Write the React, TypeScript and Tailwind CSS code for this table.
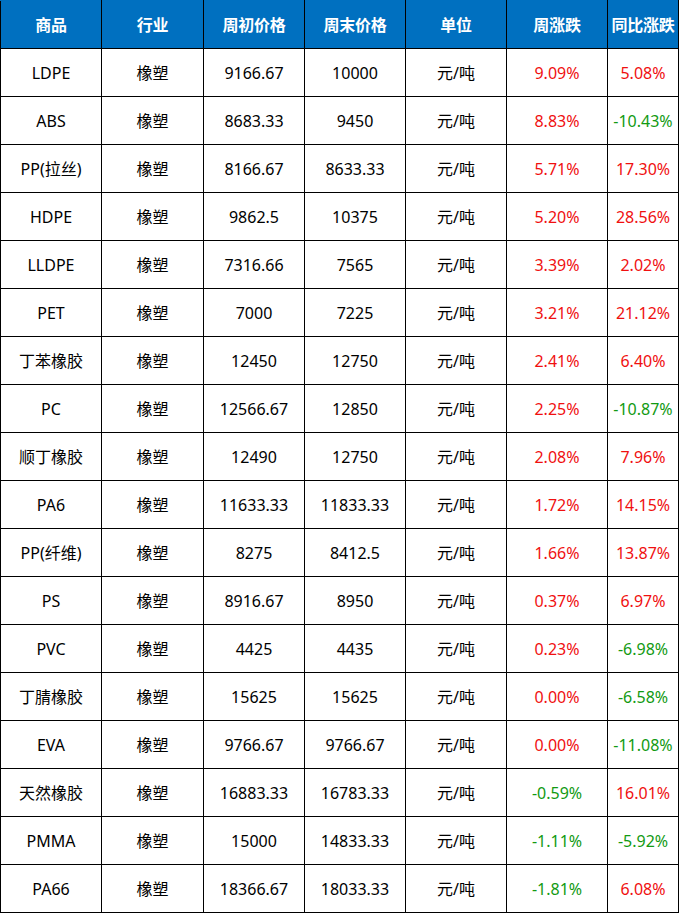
type Row = {
  name: string
  start: string
  end: string
  wow: string
  yoy: string
}

const rows: Row[] = [
  { name: 'LDPE', start: '9166.67', end: '10000', wow: '9.09%', yoy: '5.08%' },
  { name: 'ABS', start: '8683.33', end: '9450', wow: '8.83%', yoy: '-10.43%' },
  { name: 'PP(拉丝)', start: '8166.67', end: '8633.33', wow: '5.71%', yoy: '17.30%' },
  { name: 'HDPE', start: '9862.5', end: '10375', wow: '5.20%', yoy: '28.56%' },
  { name: 'LLDPE', start: '7316.66', end: '7565', wow: '3.39%', yoy: '2.02%' },
  { name: 'PET', start: '7000', end: '7225', wow: '3.21%', yoy: '21.12%' },
  { name: '丁苯橡胶', start: '12450', end: '12750', wow: '2.41%', yoy: '6.40%' },
  { name: 'PC', start: '12566.67', end: '12850', wow: '2.25%', yoy: '-10.87%' },
  { name: '顺丁橡胶', start: '12490', end: '12750', wow: '2.08%', yoy: '7.96%' },
  { name: 'PA6', start: '11633.33', end: '11833.33', wow: '1.72%', yoy: '14.15%' },
  { name: 'PP(纤维)', start: '8275', end: '8412.5', wow: '1.66%', yoy: '13.87%' },
  { name: 'PS', start: '8916.67', end: '8950', wow: '0.37%', yoy: '6.97%' },
  { name: 'PVC', start: '4425', end: '4435', wow: '0.23%', yoy: '-6.98%' },
  { name: '丁腈橡胶', start: '15625', end: '15625', wow: '0.00%', yoy: '-6.58%' },
  { name: 'EVA', start: '9766.67', end: '9766.67', wow: '0.00%', yoy: '-11.08%' },
  { name: '天然橡胶', start: '16883.33', end: '16783.33', wow: '-0.59%', yoy: '16.01%' },
  { name: 'PMMA', start: '15000', end: '14833.33', wow: '-1.11%', yoy: '-5.92%' },
  { name: 'PA66', start: '18366.67', end: '18033.33', wow: '-1.81%', yoy: '6.08%' },
]

const headers = ['商品', '行业', '周初价格', '周末价格', '单位', '周涨跌', '同比涨跌']

// negative -> green, everything else red (0.00% included)
function pctColor(v: string) {
  return v.startsWith('-') ? 'text-[#129a12]' : 'text-[#f01010]'
}

export default function App() {
  const cell = 'border border-black h-[48px] p-0 text-center align-middle'
  return (
    <div className="w-[679px] bg-white font-['Noto_Sans','Noto_Sans_CJK_SC',sans-serif]">
      <table className="w-[678px] border-collapse table-fixed text-[16px] leading-none">
        <colgroup>
          <col className="w-[101px]" />
          <col className="w-[102px]" />
          <col className="w-[101px]" />
          <col className="w-[101px]" />
          <col className="w-[101px]" />
          <col className="w-[101px]" />
          <col className="w-[71px]" />
        </colgroup>
        <thead>
          <tr className="bg-[#0070c0] text-white font-bold">
            {headers.map((h) => (
              <th key={h} className={`${cell} border-t-[#0070c0] whitespace-nowrap tracking-[-0.2px]`}>
                {h}
              </th>
            ))}
          </tr>
        </thead>
        <tbody className="text-black">
          {rows.map((r) => (
            <tr key={r.name}>
              <td className={cell}>{r.name}</td>
              <td className={cell}>橡塑</td>
              <td className={cell}>{r.start}</td>
              <td className={cell}>{r.end}</td>
              <td className={cell}>元/吨</td>
              <td className={`${cell} ${pctColor(r.wow)}`}>{r.wow}</td>
              <td className={`${cell} ${pctColor(r.yoy)}`}>{r.yoy}</td>
            </tr>
          ))}
        </tbody>
      </table>
    </div>
  )
}
